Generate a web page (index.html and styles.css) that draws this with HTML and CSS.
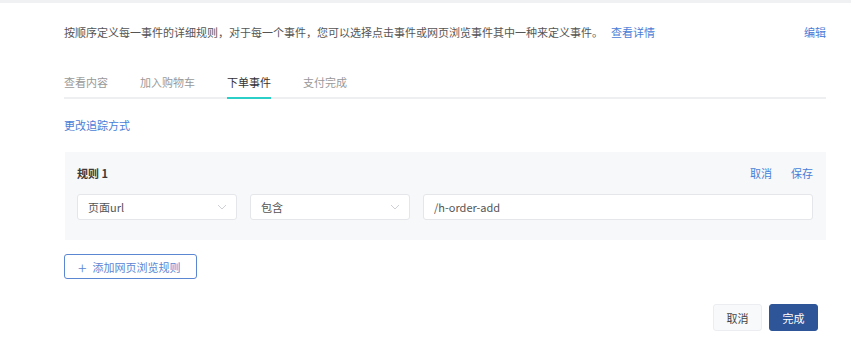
FILE: index.html
```html
<!DOCTYPE html>
<html lang="zh-CN">

<head>
    <meta charset="UTF-8">
    <meta name="viewport" content="width=device-width, initial-scale=1.0">
    <title>事件规则</title>
    <link rel="stylesheet" href="styles.css">
</head>

<body>
    <div class="topbar"></div>
    <div class="page">

        <div class="desc">
            <p class="desctext">按顺序定义每一事件的详细规则，对于每一个事件，您可以选择点击事件或网页浏览事件其中一种来定义事件。<a class="link detail" href="#">查看详情</a></p>
            <a class="link" href="#">编辑</a>
        </div>

        <div class="tabs">
            <span class="tab">查看内容</span>
            <span class="tab">加入购物车</span>
            <span class="tab active">下单事件</span>
            <span class="tab">支付完成</span>
        </div>

        <a class="link change" href="#">更改追踪方式</a>

        <div class="rule">
            <div class="rulehead">
                <span class="ruletitle">规则 1</span>
                <span class="ruleactions">
                    <a class="link" href="#">取消</a>
                    <a class="link" href="#">保存</a>
                </span>
            </div>
            <div class="rulerow">
                <div class="select">
                    <span>页面url</span>
                    <svg class="arrow" width="10" height="6" viewBox="0 0 10 6"><path d="M1 1 L5 5 L9 1" fill="none" stroke="#cdd0d6" stroke-width="1"/></svg>
                </div>
                <div class="select">
                    <span>包含</span>
                    <svg class="arrow" width="10" height="6" viewBox="0 0 10 6"><path d="M1 1 L5 5 L9 1" fill="none" stroke="#cdd0d6" stroke-width="1"/></svg>
                </div>
                <input class="textinput" type="text" value="/h-order-add">
            </div>
        </div>

        <button class="addbtn"><span class="plus">+</span>添加网页浏览规则</button>

        <div class="footer">
            <button class="btn">取消</button>
            <button class="btn primary">完成</button>
        </div>
    </div>
</body>

</html>
```

FILE: styles.css
```css
body {
    margin: 0;
    background-color: #fff;
    font-family: "Noto Sans CJK SC", "Noto Sans", sans-serif;
    font-size: 11px;
    line-height: 18px;
    color: #555;
}

.topbar {
    width: 851px;
    height: 3px;
    background-color: #f0f1f3;
}

.page {
    width: 762px;
    margin-left: 64px;
}

.link {
    color: #4a7dd6;
    text-decoration: none;
}

.desc {
    display: flex;
    justify-content: space-between;
    align-items: center;
    height: 18px;
    margin-top: 20px;
}

.desctext {
    margin: 0;
}

.detail {
    margin-left: 8px;
}

.tabs {
    display: flex;
    gap: 32px;
    margin-top: 32px;
    border-bottom: 2px solid #eeeff1;
}

.tab {
    color: #999;
    padding-bottom: 6px;
    margin-bottom: -2px;
    border-bottom: 2px solid transparent;
}

.tab.active {
    color: #333;
    border-bottom-color: #2ccfc8;
}

.change {
    display: block;
    margin-top: 17px;
}

.rule {
    margin-top: 18px;
    margin-left: 1px;
    padding: 12px 13px 20px 12px;
    background-color: #f7f8fa;
}

.rulehead {
    display: flex;
    justify-content: space-between;
}

.ruletitle {
    font-weight: bold;
    color: #3a3a3a;
}

.ruleactions {
    display: flex;
    gap: 19px;
}

.rulerow {
    display: flex;
    gap: 13px;
    margin-top: 12px;
}

.select {
    box-sizing: border-box;
    width: 160px;
    height: 26px;
    display: flex;
    justify-content: space-between;
    align-items: center;
    padding: 0 9px 0 10px;
    background-color: #fff;
    border: 1px solid #e4e6ea;
    border-radius: 3px;
    color: #555;
}

.textinput {
    box-sizing: border-box;
    flex: 1;
    height: 26px;
    padding: 0 10px;
    border: 1px solid #e4e6ea;
    border-radius: 3px;
    font-family: inherit;
    font-size: 11px;
    color: #555;
    outline: none;
}

.addbtn {
    display: flex;
    align-items: center;
    box-sizing: border-box;
    width: 133px;
    height: 25px;
    margin-top: 14px;
    padding: 0 0 0 13px;
    background-color: #fff;
    border: 1px solid #5b86d2;
    border-radius: 3px;
    font-family: inherit;
    font-size: 11px;
    color: #5b86d2;
}

.plus {
    font-size: 16px;
    font-weight: 300;
    margin-right: 6px;
    line-height: 1;
}

.footer {
    display: flex;
    justify-content: flex-end;
    gap: 7px;
    margin-top: 25px;
    padding-right: 8px;
}

.btn {
    box-sizing: border-box;
    width: 49px;
    height: 27px;
    border: 1px solid #ebedf0;
    border-radius: 3px;
    background-color: #f8f9fa;
    font-family: inherit;
    font-size: 11px;
    color: #444;
}

.btn.primary {
    background-color: #2d5597;
    border-color: #2d5597;
    color: #fff;
}
```
